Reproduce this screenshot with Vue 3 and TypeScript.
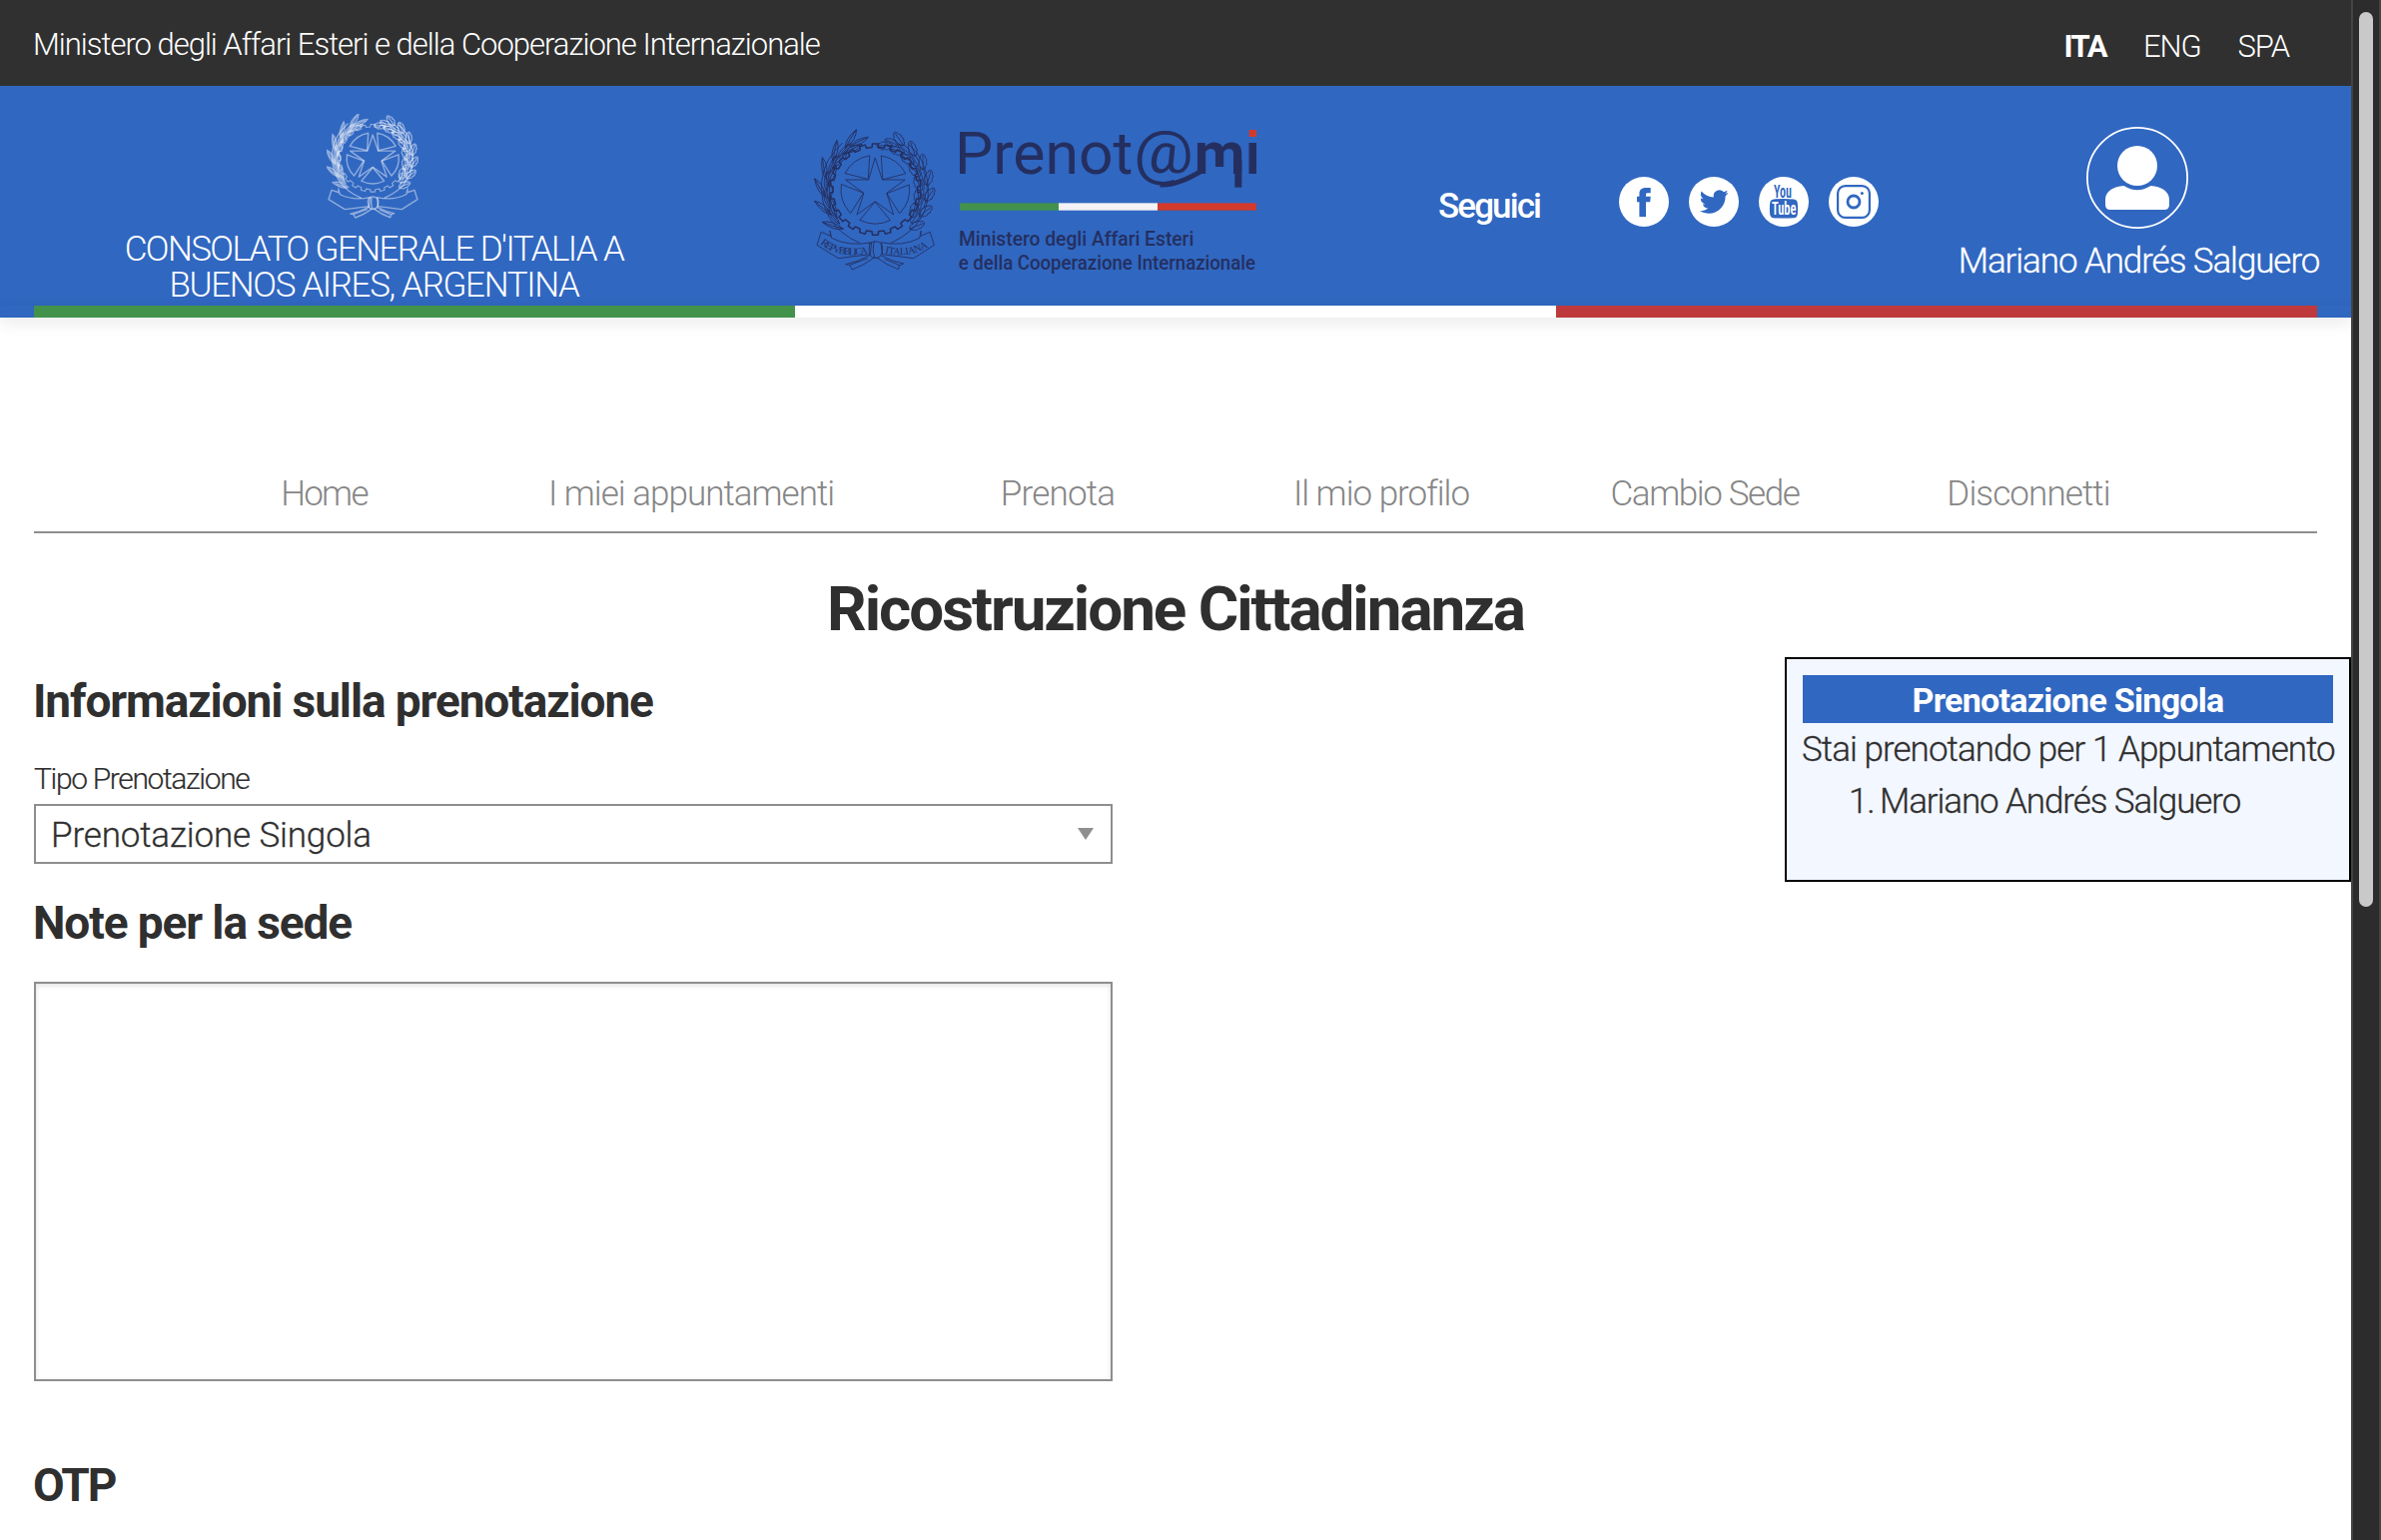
<script setup lang="ts">
interface NavItem { label: string; spacing: string }
interface Leaf { x: number; y: number; angle: number; size: number }

const nav: NavItem[] = [
  { label: 'Home', spacing: '-1.7px' },
  { label: 'I miei appuntamenti', spacing: '-.98px' },
  { label: 'Prenota', spacing: '-.8px' },
  { label: 'Il mio profilo', spacing: '-1px' },
  { label: 'Cambio Sede', spacing: '-1.4px' },
  { label: 'Disconnetti', spacing: '-.9px' },
]

const CX = 229
const CY = 239
const rad = (d: number) => (d * Math.PI) / 180
const pt = (r: number, d: number) =>
  `${(CX + r * Math.cos(rad(d))).toFixed(1)} ${(CY + r * Math.sin(rad(d))).toFixed(1)}`

// Cogwheel outline: alternating tooth and gap
const cog = (() => {
  const n = 22
  const step = 360 / n
  const p: string[] = []
  for (let i = 0; i < n; i++) {
    const a = -90 + i * step
    p.push(pt(137, a - step * 0.22), pt(137, a + step * 0.22), pt(127, a + step * 0.27), pt(127, a + step * 0.73))
  }
  return `M${p.join('L')}Z`
})()

const star = (() => {
  const p: string[] = []
  for (let i = 0; i < 10; i++) p.push(pt(i % 2 ? 36 : 94, -90 + i * 36))
  return `M${p.join('L')}Z`
})()

// The five panels between the star's arms
const panels = [0, 1, 2, 3, 4].map((i) => {
  const a = -54 + i * 72
  return `M${pt(38, a)}L${pt(103, a - 26)}A103 103 0 0 1 ${pt(103, a + 26)}Z`
})

const leafRing = (from: number, to: number, n: number, splay: number[], r: number[], size: number): Leaf[] =>
  Array.from({ length: n }, (_, i) => {
    const a = from + ((to - from) * i) / (n - 1)
    const k = i % splay.length
    const dir = to > from ? 90 : -90
    return {
      x: CX + r[k] * Math.cos(rad(a)),
      y: CY + (r[k] + 4) * Math.sin(rad(a)),
      angle: a + dir + splay[k],
      size: size * (k === 1 ? 0.9 : 1),
    }
  })

const olive = leafRing(130, 240, 17, [-20, 6, 20], [150, 147, 143], 1)
const oak = leafRing(48, -68, 21, [20, -4, -24], [155, 146, 139], 0.92)
</script>

<template>
  <div class="screen">
    <svg class="defs" width="0" height="0" aria-hidden="true">
      <defs>
        <g id="emblem" fill="none" stroke-linejoin="round" stroke-linecap="round">
          <path :d="cog" stroke-width="4.5" />
          <path :d="star" />
          <path v-for="(p, i) in panels" :key="`p${i}`" :d="p" />
          <path d="M182 400Q60 345 68 215Q74 150 130 100M276 400Q395 345 388 230Q380 140 330 105" />
          <path
            v-for="(l, i) in olive" :key="`l${i}`"
            d="M0 0Q22 -17 66 -3Q40 14 0 0M0 0Q30 -4 60 -3"
            :transform="`translate(${l.x} ${l.y}) rotate(${l.angle}) scale(${l.size})`"
          />
          <path
            v-for="(l, i) in oak" :key="`o${i}`"
            d="M0 0Q4 -13 13 -9Q18 -19 27 -12Q35 -18 41 -9Q50 -9 52 0Q48 9 40 8Q34 16 26 10Q17 17 12 8Q4 10 0 0H46"
            :transform="`translate(${l.x} ${l.y}) rotate(${l.angle}) scale(${l.size})`"
          />
          <path d="M66 368L54 406L118 446L214 434L218 398Q150 412 98 385L93 363L95 378Z" />
          <path d="M394 368L406 406L344 446L250 434L246 398Q312 412 362 385L367 363L365 378Z" />
          <path d="M212 402Q228 388 248 402Q256 420 244 440Q230 450 216 440Q206 420 212 402ZM226 396Q218 420 228 444" />
          <path d="M214 436Q180 456 140 464L152 466L160 480Q196 466 226 444M248 438Q280 456 314 462L302 467L298 479Q262 466 234 444M152 466L206 446M302 467L258 448" />
        </g>
      </defs>
    </svg>

    <div class="page">
      <div class="topbar">
        <span class="ministry">Ministero degli Affari Esteri e della Cooperazione Internazionale</span>
        <nav class="langs">
          <a class="active">ITA</a>
          <a>ENG</a>
          <a>SPA</a>
        </nav>
      </div>

      <header class="header">
        <div class="office">
          <svg class="office-emblem" viewBox="46 60 364 424" preserveAspectRatio="none">
            <use href="#emblem" />
          </svg>
          <div class="office-name l1">CONSOLATO GENERALE D'ITALIA A</div>
          <div class="office-name l2">BUENOS AIRES, ARGENTINA</div>
        </div>

        <svg class="logo" viewBox="48 57 1332 447">
          <use href="#emblem" class="logo-emblem" />
          <path id="ribbonLeft" d="M64 402Q120 450 216 430" fill="none" />
          <path id="ribbonRight" d="M258 430Q340 450 400 402" fill="none" />
          <text class="motto"><textPath href="#ribbonLeft" textLength="152">REPVBBLICA</textPath></text>
          <text class="motto"><textPath href="#ribbonRight" textLength="136">ITALIANA</textPath></text>
          <text class="word" x="468" y="191" textLength="535" lengthAdjust="spacingAndGlyphs">Prenot</text>
          <text class="word at" x="1005" y="190" textLength="180" lengthAdjust="spacingAndGlyphs">@</text>
          <path class="tail" d="M1085 225Q1135 228 1208 184" />
          <text class="word bold" x="1187" y="191" textLength="152" lengthAdjust="spacingAndGlyphs">m</text>
          <rect class="ink" x="1309" y="150" width="21" height="83" />
          <rect x="1246" y="171" width="34" height="24" fill="#3067c1" />
          <text class="word bold" x="1342" y="191" textLength="42" lengthAdjust="spacingAndGlyphs">i</text>
          <rect x="1345" y="50" width="36" height="38" fill="#3067c1" />
          <rect x="1352" y="60" width="22" height="21" fill="#d23a2c" />
          <rect x="483" y="280" width="297" height="22" fill="#42924c" />
          <rect x="780" y="280" width="297" height="22" fill="#f3f2f5" />
          <rect x="1077" y="280" width="297" height="22" fill="#d23a2c" />
          <text class="caption" x="480" y="408" textLength="706" lengthAdjust="spacingAndGlyphs">Ministero degli Affari Esteri</text>
          <text class="caption" x="479" y="480" textLength="892" lengthAdjust="spacingAndGlyphs">e della Cooperazione Internazionale</text>
        </svg>

        <span class="follow">Seguici</span>

        <div class="social">
          <svg viewBox="0 0 50 50">
            <circle cx="25" cy="25" r="25" />
            <path class="cut" d="M20.4 40V25.3H18V19.7h2.4v-2.4c0-4.2 2.2-6.3 6.3-6.3h5v5.3h-2.9c-1.5 0-1.8.6-1.8 2v1.4h4.7l-.5 5.6H27V40z" />
          </svg>
          <svg viewBox="0 0 50 50">
            <circle cx="25" cy="25" r="25" />
            <path class="cut" transform="translate(10.7 10.6) scale(1.2)" d="M23.953 4.57a10 10 0 0 1-2.825.775 4.958 4.958 0 0 0 2.163-2.723c-.951.555-2.005.959-3.127 1.184a4.92 4.92 0 0 0-8.384 4.482C7.69 8.095 4.067 6.13 1.64 3.162a4.822 4.822 0 0 0-.666 2.475c0 1.71.87 3.213 2.188 4.096a4.904 4.904 0 0 1-2.228-.616v.06a4.923 4.923 0 0 0 3.946 4.827 4.996 4.996 0 0 1-2.212.085 4.936 4.936 0 0 0 4.604 3.417 9.867 9.867 0 0 1-6.102 2.105c-.39 0-.779-.023-1.17-.067a13.995 13.995 0 0 0 7.557 2.209c9.053 0 13.998-7.496 13.998-13.985 0-.21 0-.42-.015-.63A9.935 9.935 0 0 0 24 4.59z" />
          </svg>
          <svg viewBox="0 0 50 50">
            <circle cx="25" cy="25" r="25" />
            <text class="yt" x="15" y="21" textLength="18" lengthAdjust="spacingAndGlyphs">You</text>
            <path class="cut" d="M15 22.4Q25 21.4 35 22.4Q38.6 22.8 38.8 26.5Q39.4 32 38.8 37.5Q38.4 41 35 41.2Q25 42 15 41.2Q11.6 41 11.2 37.5Q10.6 32 11.2 26.5Q11.4 22.8 15 22.4Z" />
            <text class="yt tube" x="13" y="37.8" textLength="24.4" lengthAdjust="spacingAndGlyphs">Tube</text>
          </svg>
          <svg viewBox="0 0 50 50">
            <circle cx="25" cy="25" r="25" />
            <rect class="line" x="9.1" y="9.1" width="31.8" height="31.8" rx="7.5" stroke-width="2.2" />
            <circle class="line" cx="25" cy="25" r="6" stroke-width="2.8" />
            <circle class="cut" cx="33.4" cy="16.5" r="1.5" />
          </svg>
        </div>

        <div class="profile">
          <svg class="avatar" viewBox="0 0 102 102">
            <circle cx="51" cy="51" r="50.1" fill="none" stroke="#fff" stroke-width="1.8" />
            <circle cx="51" cy="39" r="20" fill="#fff" />
            <path fill="#fff" d="M37.5 59Q51 67.4 64.5 59C75 60 83 64 83 73V78Q83 83 78 83H24Q19 83 19 78V73C19 64 27 60 37.5 59Z" />
          </svg>
          <span class="profile-name">Mariano Andrés Salguero</span>
        </div>
      </header>
      <div class="flag-row">
        <div class="flag"><i /><i /><i /></div>
      </div>

      <div class="container">
        <nav class="menu">
          <a v-for="item in nav" :key="item.label" :style="{ letterSpacing: item.spacing }">{{ item.label }}</a>
        </nav>
        <h1>Ricostruzione Cittadinanza</h1>
      </div>

      <main class="content">
        <section class="form">
          <h2 class="info">Informazioni sulla prenotazione</h2>
          <label>Tipo Prenotazione</label>
          <div class="select">
            <span>Prenotazione Singola</span>
            <svg width="16" height="12" viewBox="0 0 16 12"><path d="M0 0H16L8 12Z" fill="#8e8e8e" /></svg>
          </div>
          <h2 class="note">Note per la sede</h2>
          <div class="textarea" />
          <h2 class="otp">OTP</h2>
        </section>

        <aside class="summary">
          <div class="summary-title">Prenotazione Singola</div>
          <p>Stai prenotando per 1 Appuntamento</p>
          <ol><li><span>1.</span>Mariano Andrés Salguero</li></ol>
        </aside>
      </main>
    </div>

    <div class="scrollbar"><div class="thumb" /></div>
  </div>
</template>

<style scoped>
.screen {
  display: flex;
  width: 2384px;
  height: 1542px;
  overflow: hidden;
  background: #fff;
  font-family: Roboto, "Open Sans", sans-serif;
  font-weight: 300;
  font-size: 35px;
  line-height: 36px;
  color: #2f2f2f;
  white-space: nowrap;
}
.defs { position: absolute; }
.page { width: 2354px; height: 1542px; overflow: hidden; }

.topbar {
  box-sizing: border-box;
  height: 86px;
  padding: 0 62px 0 33px;
  display: flex;
  justify-content: space-between;
  align-items: center;
  background: #303030;
  color: #fff;
  font-size: 31px;
}
.ministry { padding-top: 4px; letter-spacing: -1.01px; }
.langs { display: flex; gap: 37px; padding-top: 7px; letter-spacing: -1.1px; }
.langs .active { font-weight: 700; letter-spacing: -1.5px; }

.header {
  height: 220px;
  display: flex;
  align-items: flex-start;
  background: #3067c1;
  color: #fff;
}
.office {
  width: 681px;
  margin-left: 34px;
  padding-top: 28px;
  display: flex;
  flex-direction: column;
  align-items: center;
}
.office-emblem {
  width: 92px;
  height: 105px;
  margin: 0 4px 13px 0;
  stroke: rgba(255, 255, 255, .46);
  stroke-width: 5.5;
}
.office-name.l1 { letter-spacing: -1.6px; }
.office-name.l2 { letter-spacing: -1.35px; }
.logo { width: 444px; height: 149px; margin: 43px 0 0 101px; overflow: visible; }
.logo-emblem { stroke: #242f60; stroke-width: 2.6; }
.motto { font-family: "Liberation Serif", serif; font-size: 31px; font-weight: 400; fill: #242f60; }
.word { font-size: 180px; font-weight: 400; fill: #242f60; }
.bold { font-weight: 700; }
.tail { fill: none; stroke: #242f60; stroke-width: 15; }
.ink { fill: #242f60; }
.caption { font-size: 60px; font-weight: 500; fill: #242f60; }
.follow { width: 181px; margin: 103px 0 0 180px; font-weight: 500; letter-spacing: -1.9px; }
.social { display: flex; gap: 20px; margin-top: 91px; }
.social svg { width: 50px; height: 50px; fill: #fff; }
.social .cut { fill: #3067c1; }
.social .line { fill: none; stroke: #3067c1; }
.social .yt { font-size: 19px; font-weight: 600; font-stretch: 75%; fill: #3067c1; }
.social .tube { fill: #fff; font-size: 18px; }
.profile {
  margin: 41px 34px 0 auto;
  width: 357px;
  display: flex;
  flex-direction: column;
  align-items: center;
}
.avatar { width: 102px; height: 102px; margin-right: 4px; }
.profile-name { margin-top: 15px; letter-spacing: -1.08px; -webkit-text-stroke: .3px #fff; }

.flag-row {
  height: 12px;
  padding: 0 34px;
  background: #3067c1;
  box-shadow: 0 4px 16px rgba(0, 0, 0, .1);
}
.flag { display: flex; height: 12px; }
.flag i { flex: 1; background: #fff; }
.flag i:first-child { background: #42924c; }
.flag i:last-child { background: #bd393b; }

.container { padding: 0 34px; }
.menu {
  height: 214px;
  padding: 0 148px 0 107px;
  border-bottom: 2px solid #8e8e8e;
  display: grid;
  grid-template-columns: 367px 368px 366px 282px 366px 282px;
  align-items: end;
  color: #868686;
  text-align: center;
}
.menu a { padding-bottom: 19px; }
h1 {
  margin: 40px 0 0;
  font-size: 62px;
  line-height: 72px;
  font-weight: 700;
  text-align: center;
  letter-spacing: -2.05px;
}
.content { display: flex; justify-content: space-between; align-items: flex-start; padding-left: 34px; margin-top: 12px; }
.form { width: 1080px; display: flex; flex-direction: column; }
h2 { margin: 0 0 0 -1px; font-size: 46px; line-height: 56px; font-weight: 700; letter-spacing: -1.1px; }
.info { margin-top: 16px; }
label { margin-top: 32px; font-size: 30px; line-height: 36px; letter-spacing: -1.35px; -webkit-text-stroke: .2px #2f2f2f; }
.select {
  box-sizing: border-box;
  height: 60px;
  margin-top: 7px;
  padding: 0 17px 0 15px;
  border: 2px solid #8e8e8e;
  display: flex;
  align-items: center;
  justify-content: space-between;
}
.select span { padding-top: 3px; letter-spacing: -.15px; -webkit-text-stroke: .3px #2f2f2f; }
.note { margin-top: 31px; }
.textarea {
  box-sizing: border-box;
  height: 400px;
  margin-top: 31px;
  border: 2px solid #8e8e8e;
  box-shadow: inset 0 2px 5px rgba(0, 0, 0, .12);
}
.otp { margin-top: 76px; letter-spacing: -2px; }

.summary {
  box-sizing: border-box;
  width: 567px;
  height: 225px;
  padding: 16px;
  border: 2px solid #000;
  background: #f3f7ff;
}
.summary-title {
  height: 48px;
  line-height: 51px;
  background: #3067c1;
  color: #fff;
  font-weight: 700;
  font-size: 34px;
  text-align: center;
  letter-spacing: -.72px;
}
.summary p { margin: 9px 0 0 -1px; letter-spacing: -.94px; -webkit-text-stroke: .3px #2f2f2f; }
.summary ol { margin: 16px 0 0; padding: 0 0 0 46px; list-style: none; letter-spacing: -1.1px; -webkit-text-stroke: .3px #2f2f2f; }
.summary li span { display: inline-block; width: 31px; }

.scrollbar {
  box-sizing: border-box;
  width: 30px;
  height: 1542px;
  padding: 12px 6px 0;
  border-left: 2px solid #444;
  border-right: 2px solid #444;
  background: #2c2c2c;
}
.thumb { width: 14px; height: 896px; border-radius: 7px; background: #c9c9c9; }
</style>
